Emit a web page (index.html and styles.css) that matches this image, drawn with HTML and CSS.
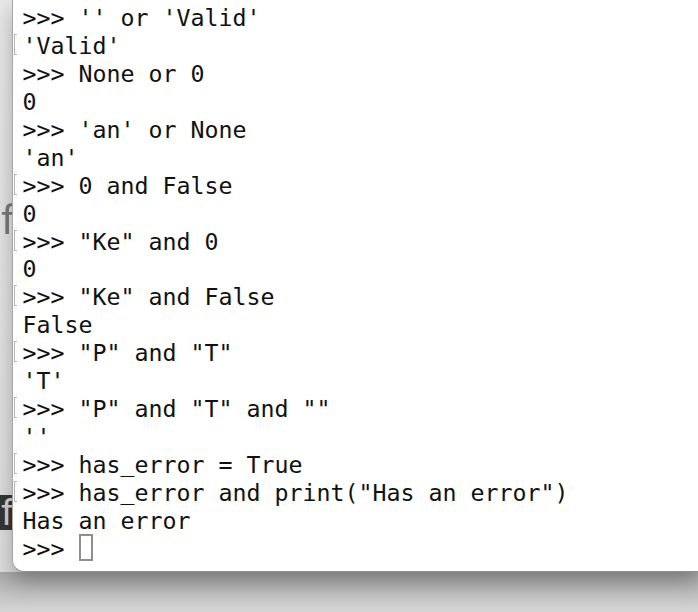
FILE: index.html
```html
<!DOCTYPE html>
<html>
<head>
<meta charset="utf-8">
<link rel="stylesheet" href="styles.css">
</head>
<body>
<div class="desk">
  <div class="behind">
    <span class="ghost-f">f</span>
    <span class="ghost-f dark">f</span>
  </div>
  <div class="window">
    <div class="line"><span class="gutter"></span><span class="txt">&gt;&gt;&gt; '' or 'Valid'</span></div>
    <div class="line"><span class="gutter"><i class="mark"></i></span><span class="txt">'Valid'</span></div>
    <div class="line"><span class="gutter"></span><span class="txt">&gt;&gt;&gt; None or 0</span></div>
    <div class="line"><span class="gutter"></span><span class="txt">0</span></div>
    <div class="line"><span class="gutter"></span><span class="txt">&gt;&gt;&gt; 'an' or None</span></div>
    <div class="line"><span class="gutter"></span><span class="txt">'an'</span></div>
    <div class="line"><span class="gutter"><i class="mark"></i></span><span class="txt">&gt;&gt;&gt; 0 and False</span></div>
    <div class="line"><span class="gutter"></span><span class="txt">0</span></div>
    <div class="line"><span class="gutter"><i class="mark"></i></span><span class="txt">&gt;&gt;&gt; "Ke" and 0</span></div>
    <div class="line"><span class="gutter"></span><span class="txt">0</span></div>
    <div class="line"><span class="gutter"><i class="mark"></i></span><span class="txt">&gt;&gt;&gt; "Ke" and False</span></div>
    <div class="line"><span class="gutter"></span><span class="txt">False</span></div>
    <div class="line"><span class="gutter"><i class="mark"></i></span><span class="txt">&gt;&gt;&gt; "P" and "T"</span></div>
    <div class="line"><span class="gutter"></span><span class="txt">'T'</span></div>
    <div class="line"><span class="gutter"><i class="mark"></i></span><span class="txt">&gt;&gt;&gt; "P" and "T" and ""</span></div>
    <div class="line"><span class="gutter"></span><span class="txt">''</span></div>
    <div class="line"><span class="gutter"><i class="mark"></i></span><span class="txt">&gt;&gt;&gt; has<span class="us">_</span>error = True</span></div>
    <div class="line"><span class="gutter"><i class="mark"></i></span><span class="txt">&gt;&gt;&gt; has<span class="us">_</span>error and print("Has an error")</span></div>
    <div class="line"><span class="gutter"></span><span class="txt">Has an error</span></div>
    <div class="line"><span class="gutter"></span><span class="txt">&gt;&gt;&gt; <span class="cursor"></span></span></div>
  </div>
</div>
<div class="floor"></div>
</body>
</html>
```

FILE: styles.css
```css
html, body {
  margin: 0;
  padding: 0;
  width: 698px;
  height: 612px;
  overflow: hidden;
  background: #d8d8d8;
}

.desk {
  display: flex;
  height: 572px;
  background: linear-gradient(#e9e9e9, #dedede);
  position: relative;
}

.behind {
  width: 12px;
  flex: none;
  position: relative;
}

.ghost-f {
  position: absolute;
  left: 1px;
  top: 200px;
  font-family: "DejaVu Sans", sans-serif;
  font-size: 40px;
  line-height: 40px;
  color: #7a7a7a;
  filter: blur(0.6px);
}

.ghost-f.dark {
  top: 495px;
  left: 0;
  width: 12px;
  height: 35px;
  padding-left: 1px;
  box-sizing: border-box;
  background: #363636;
  color: #d4d4d4;
  font-size: 36px;
  line-height: 36px;
  filter: none;
}

.window {
  flex: 1;
  background: #ffffff;
  border-left: 1px solid #a6a6a6;
  border-bottom: 1px solid #8e8e8e;
  border-bottom-left-radius: 12px;
  padding-top: 4px;
  box-sizing: border-box;
  position: relative;
  z-index: 1;
  box-shadow: 0 10px 22px rgba(0, 0, 0, 0.28);
}

.line {
  display: flex;
  height: 27.95px;
  font-family: "DejaVu Sans Mono", monospace;
  font-size: 23.25px;
  line-height: 27.95px;
  color: #111111;
  white-space: pre;
}

.gutter {
  width: 9.5px;
  flex: none;
  position: relative;
}

.mark {
  position: absolute;
  left: 1px;
  top: 2px;
  width: 3px;
  height: 21px;
  border: 1.5px solid #b4b4b4;
  border-right: none;
  box-sizing: border-box;
}

.txt {
  display: block;
}

.us {
  line-height: 0;
  vertical-align: 2px;
}

.cursor {
  display: inline-block;
  width: 14px;
  height: 27px;
  border: 2px solid #8e8e8e;
  box-sizing: border-box;
  vertical-align: top;
  margin-top: -1px;
}

.floor {
  height: 40px;
  background: linear-gradient(#a8a8a8, #d6d6d6);
}
```
